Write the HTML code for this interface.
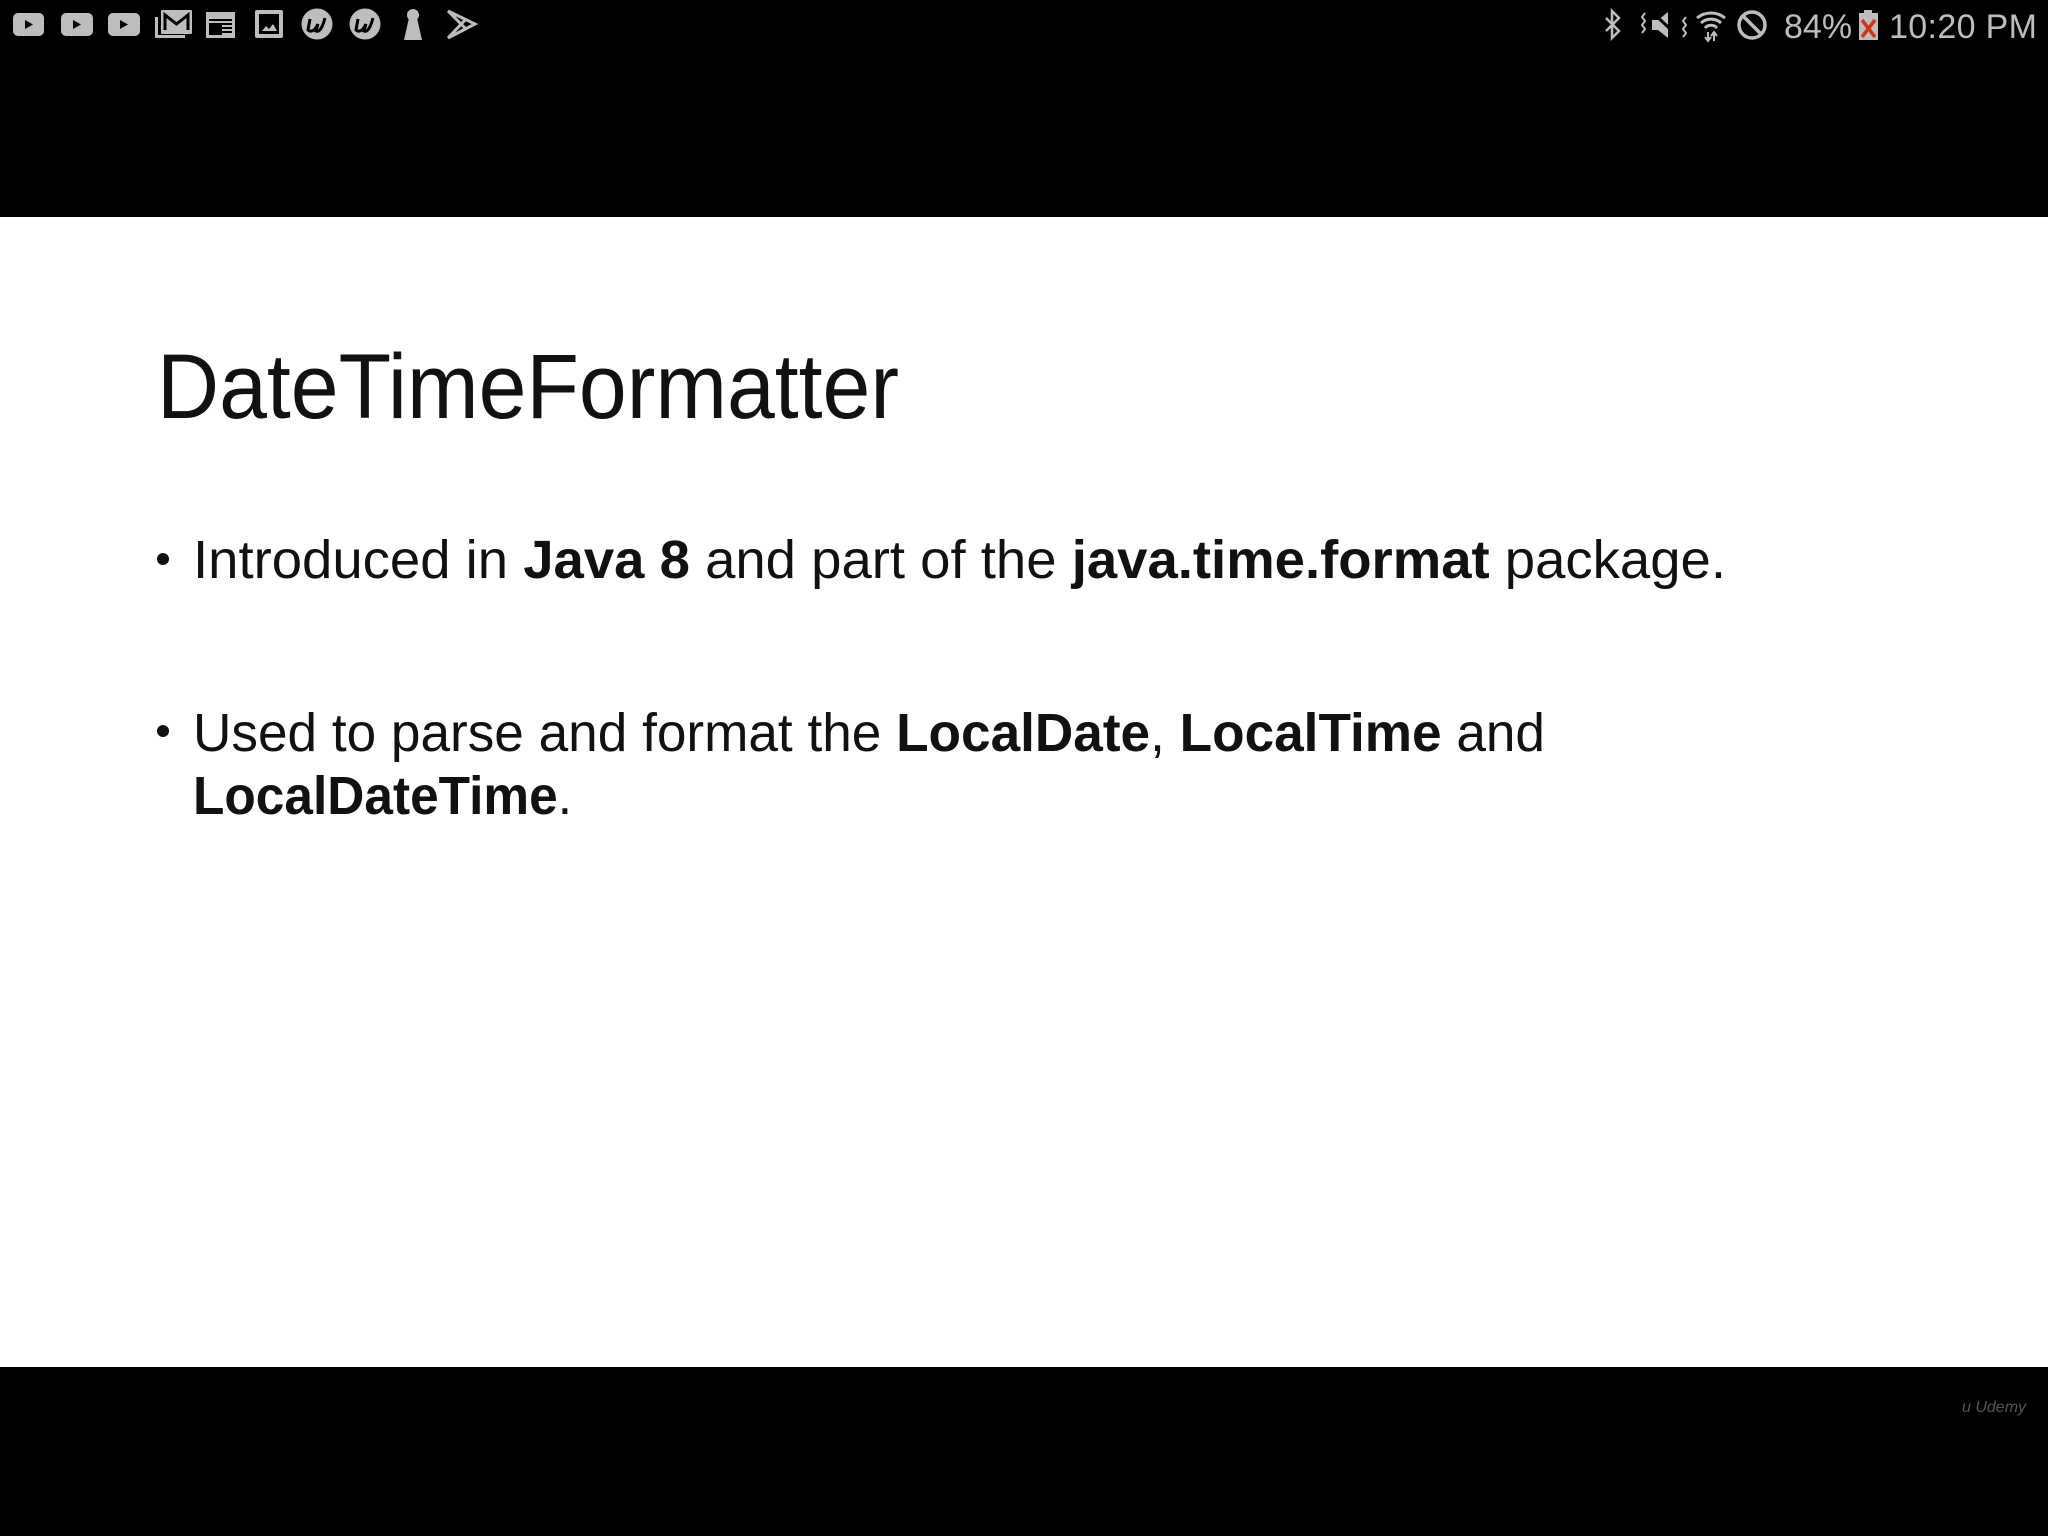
<!DOCTYPE html>
<html><head><meta charset="utf-8"><style>
html,body{margin:0;padding:0;background:#000;width:2048px;height:1536px;overflow:hidden}
.slide{position:absolute;left:0;top:217px;width:2048px;height:1150px;background:#fff}
svg{position:absolute;left:0;top:0}
</style></head><body>
<div class="slide"></div>
<svg width="2048" height="1536" xmlns="http://www.w3.org/2000/svg">
<g fill="#bdbdbd">
 <!-- youtube -->
 <rect x="13" y="13" width="31" height="23" rx="5"/><path d="M25 20 L33 24.5 L25 29Z" fill="#000"/>
 <rect x="61" y="13" width="32" height="23" rx="5"/><path d="M73 20 L81 24.5 L73 29Z" fill="#000"/>
 <rect x="108" y="13" width="32" height="23" rx="5"/><path d="M120 20 L128 24.5 L120 29Z" fill="#000"/>
 <!-- gmail -->
 <path d="M155 17 h3 v18 h27 v3 h-30Z"/>
 <rect x="161" y="10" width="31" height="24" rx="1"/>
 <path d="M165 30 V15 L176.5 24 L188 15 V30" fill="none" stroke="#000" stroke-width="3"/>
 <!-- calendar -->
 <rect x="206" y="12" width="29" height="26"/>
 <rect x="209" y="19" width="23" height="16" fill="#000"/>
 <rect x="209" y="21" width="23" height="2"/>
 <rect x="222" y="25" width="10" height="2"/><rect x="222" y="29" width="10" height="2"/><rect x="222" y="33" width="10" height="2"/>
 <!-- image -->
 <rect x="255" y="10" width="28" height="28" rx="2"/>
 <rect x="259" y="14" width="20" height="20" fill="#000"/>
 <path d="M262 31 L266 26 L269 29 L273 24 L277 31Z"/>
 <!-- udemy -->
 <circle cx="317" cy="24" r="15.5"/><path d="M310 19 L308 30 Q313 34 318 24 L316 31 Q321 33 325 18" fill="none" stroke="#000" stroke-width="3"/>
 <circle cx="365" cy="24" r="15.5"/><path d="M358 19 L356 30 Q361 34 366 24 L364 31 Q369 33 373 18" fill="none" stroke="#000" stroke-width="3"/>
 <!-- keyhole -->
 <circle cx="413" cy="15" r="6"/><path d="M409 18 h8 l5 22 h-18Z"/>
 <!-- play -->
 <path d="M448 11 L475 24 L448 38 M448 11 L466 29 M448 38 L466 19" fill="none" stroke="#bdbdbd" stroke-width="3"/>
 <!-- right side -->
 <path d="M1606 18 L1619 31 L1612 38 V11 L1619 18 L1606 31" fill="none" stroke="#bdbdbd" stroke-width="2.5"/>
 <path d="M1652 20 h6 l10 -8 v26 l-10 -8 h-6Z"/>
 <path d="M1652 12 L1682 40" stroke="#000" stroke-width="3"/>
 <path d="M1645 13 l-3 4 3 4 -3 4 3 4 -3 4 M1686 17 l-3 4 3 4 -3 4 3 4 -3 4" fill="none" stroke="#bdbdbd" stroke-width="2"/>
 <path d="M1697 18 A22 22 0 0 1 1725 18 M1701 23 A15 15 0 0 1 1721 23 M1705 28 A8 8 0 0 1 1717 28" fill="none" stroke="#bdbdbd" stroke-width="3"/>
 <path d="M1708 32 v8 M1705 37 l3 4 3-4 M1714 41 v-8 M1711 36 l3-4 3 4" fill="none" stroke="#bdbdbd" stroke-width="2"/>
 <circle cx="1752" cy="25" r="13" fill="none" stroke="#bdbdbd" stroke-width="3.5"/>
 <path d="M1743 16 L1761 34" stroke="#bdbdbd" stroke-width="3.5"/>
 <text x="1784" y="38" font-family="Liberation Sans, sans-serif" font-size="34" fill="#bdbdbd">84%</text>
 <rect x="1864" y="10" width="8" height="4"/>
 <rect x="1859" y="13" width="19" height="27"/>
 <path d="M1862 20 L1875 37 M1875 20 L1862 37" stroke="#d0351d" stroke-width="3.5"/>
 <text x="1889" y="38" font-family="Liberation Sans, sans-serif" font-size="34" fill="#bdbdbd" textLength="148">10:20 PM</text>
</g>
<g font-family="Liberation Sans, sans-serif" fill="#111">
 <text x="157" y="418" font-size="92" textLength="742" lengthAdjust="spacingAndGlyphs">DateTimeFormatter</text>
 <circle cx="163" cy="559" r="6"/>
 <circle cx="163" cy="731" r="6"/>
 <text x="193" y="578" font-size="54" textLength="1533" lengthAdjust="spacingAndGlyphs">Introduced in <tspan font-weight="bold">Java 8</tspan>  and part of the <tspan font-weight="bold">java.time.format</tspan> package.</text>
 <text x="193" y="751" font-size="54" textLength="1352" lengthAdjust="spacingAndGlyphs">Used to parse and format the <tspan font-weight="bold">LocalDate</tspan>, <tspan font-weight="bold">LocalTime</tspan> and</text>
 <text x="193" y="814" font-size="54" textLength="379" lengthAdjust="spacingAndGlyphs"><tspan font-weight="bold">LocalDateTime</tspan>.</text>
</g>
<text x="1962" y="1412" font-family="Liberation Sans, sans-serif" font-size="16" fill="#555" font-style="italic">u Udemy</text>
</svg>
</body></html>
